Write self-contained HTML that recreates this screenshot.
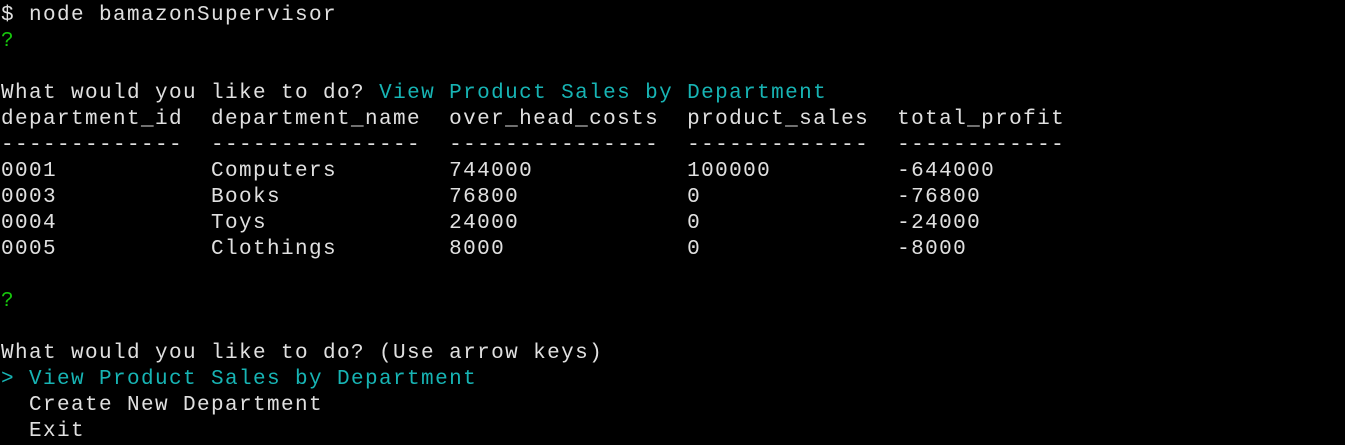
<!DOCTYPE html><html><head><style>
html,body{margin:0;background:#000;width:1345px;height:445px;overflow:hidden}
pre{margin:0;position:absolute;left:1px;top:3px;font-family:"Liberation Mono",monospace;font-size:21px;letter-spacing:1.4px;line-height:26px;color:#e0e0e0}
.g{color:#16c60c}.c{color:#17b4b4}
</style></head><body><pre>$ node bamazonSupervisor
<span class="g">?</span>

What would you like to do? <span class="c">View Product Sales by Department</span>
department_id  department_name  over_head_costs  product_sales  total_profit
-------------  ---------------  ---------------  -------------  ------------
0001           Computers        744000           100000         -644000
0003           Books            76800            0              -76800
0004           Toys             24000            0              -24000
0005           Clothings        8000             0              -8000

<span class="g">?</span>

What would you like to do? (Use arrow keys)
<span class="c">&gt; View Product Sales by Department</span>
  Create New Department
  Exit</pre></body></html>
